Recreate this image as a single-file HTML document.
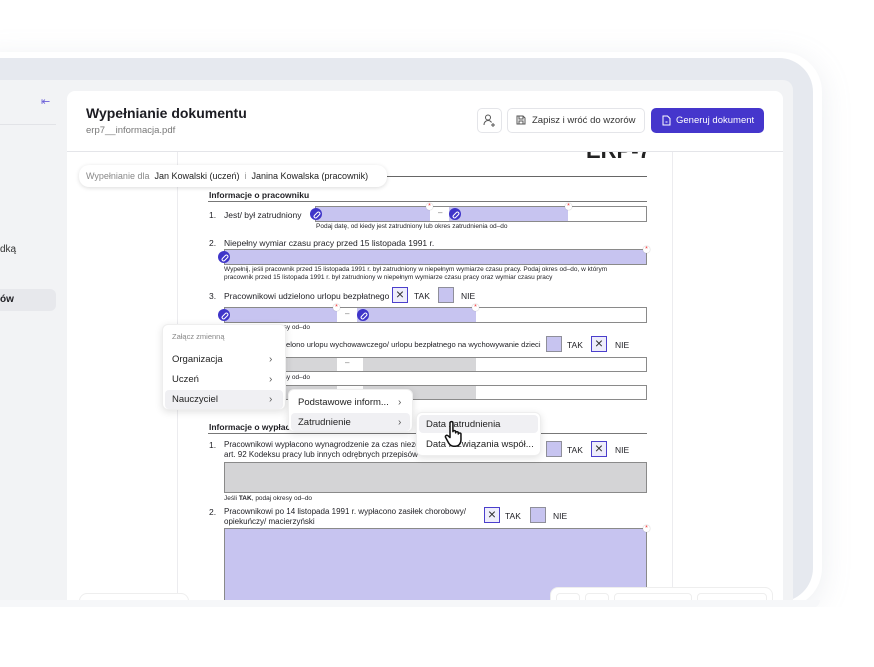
<!DOCTYPE html>
<html><head><meta charset="utf-8"><style>
*{margin:0;padding:0;box-sizing:border-box}
body{width:874px;height:660px;background:#fff;position:relative;overflow:hidden;font-family:"Liberation Sans",sans-serif;color:#1f1f24}
.a{position:absolute}
.t{position:absolute;white-space:nowrap}
.lk{position:absolute;width:12px;height:12px;border-radius:50%;background:#3f35c9}
.lk:after{content:"";position:absolute;left:3px;top:5px;width:6px;height:2px;border:1px solid #fff;border-radius:2px;transform:rotate(-45deg)}
.fld{position:absolute;border:1px solid #8a8a8a;background:#fff}
.fld.pur{background:#c7c4f0}
.pur{background:#c7c4f0}
.st{position:absolute;width:7px;height:7px;border-radius:50%;background:#fff;color:#e33;font-size:7px;line-height:8px;text-align:center;box-shadow:0 0 1px #999}
.cb{position:absolute;width:16px;height:16px;border:1.5px solid #8f8f9a}
.cbp{background:#c7c4f0}
.cbx{border-color:#4b3fcc;background:#eeedfb;font-size:14px;line-height:13px;text-align:center;color:#333}
.s9{font-size:8.5px}
.s7{font-size:6.5px}
.menu{position:absolute;background:#fff;border-radius:6px;box-shadow:0 2px 8px rgba(0,0,0,.12);border:1px solid #eee}
.mi{position:absolute;font-size:9.5px;color:#222;white-space:nowrap}
.hl{position:absolute;background:#f0f0f3;border-radius:4px}
.ch{position:absolute;font-size:10px;color:#555}
</style></head><body>
<div class="a" style="left:-40px;top:52px;width:862px;height:556px;border-radius:40px;background:#fff;box-shadow:0 6px 30px rgba(150,160,180,.18)"></div>
<div class="a" style="left:-40px;top:58px;width:853px;height:544px;border-radius:34px;background:#e6e9ef"></div>
<div class="a" style="left:-40px;top:80px;width:833px;height:520px;border-radius:0 10px 0 0;background:#f2f3f5"></div>
<div class="a" style="left:0;top:124px;width:56px;height:1px;background:#e2e3e7"></div>
<div class="t" style="left:41px;top:95px;color:#6b5fd8;font-size:11px">⇤</div>
<div class="t" style="left:0;top:244px;font-size:10px;color:#333">dką</div>
<div class="a" style="left:0;top:289px;width:56px;height:22px;background:#e7e8ec;border-radius:0 6px 6px 0"></div>
<div class="t" style="left:0;top:294px;font-size:10px;font-weight:bold">ów</div>
<div class="a" style="left:67px;top:91px;width:716px;height:509px;background:#fff;border-radius:8px 8px 0 0"></div>
<div class="t" style="left:86px;top:105px;font-size:14px;font-weight:bold;color:#1c1c22">Wypełnianie dokumentu</div>
<div class="t" style="left:86px;top:125px;font-size:9.5px;color:#777">erp7__informacja.pdf</div>
<div class="a" style="left:67px;top:151px;width:716px;height:1px;background:#e4e5e9"></div>
<div class="a" style="left:477px;top:108px;width:25px;height:25px;border:1px solid #e4e5e9;border-radius:5px"></div>
<svg class="a" style="left:482px;top:113px" width="15" height="15" viewBox="0 0 15 15" fill="none" stroke="#555" stroke-width="1"><circle cx="6" cy="4.5" r="2.5"/><path d="M2 12c0-3 2-4.5 4-4.5s3 1 3.5 2M11 10v4M9 12h4"/></svg>
<div class="a" style="left:507px;top:108px;width:138px;height:25px;border:1px solid #e4e5e9;border-radius:5px"></div>
<svg class="a" style="left:516px;top:115px" width="10" height="10" viewBox="0 0 10 10" fill="none" stroke="#555" stroke-width="1"><path d="M1 1h6l2 2v6H1z M3 1v3h4V1 M3 9V6h4v3"/></svg>
<div class="t" style="left:532px;top:115px;font-size:9.5px;color:#333">Zapisz i wróć do wzorów</div>
<div class="a" style="left:651px;top:108px;width:113px;height:25px;background:#4536cc;border-radius:5px"></div>
<svg class="a" style="left:662px;top:115px" width="9" height="11" viewBox="0 0 9 11" fill="none" stroke="#fff" stroke-width="1"><path d="M1 1h4.5L8 3.5V10H1z M3.5 7h2"/></svg>
<div class="t" style="left:676px;top:115px;font-size:9.5px;color:#fff">Generuj dokument</div>
<div class="a" style="left:177px;top:152px;width:1px;height:448px;background:#ececef"></div>
<div class="a" style="left:672px;top:152px;width:1px;height:448px;background:#ececef"></div>
<div class="a" style="left:580px;top:152px;width:70px;height:9px;overflow:hidden"><div class="t" style="left:6px;top:-14px;font-size:22px;font-weight:bold;color:#222">ERP-7</div></div>
<div class="a" style="left:380px;top:176px;width:267px;height:1px;background:#666"></div>
<div class="a" style="left:79px;top:165px;width:308px;height:22px;background:#fff;border-radius:10px;box-shadow:0 1px 4px rgba(0,0,0,.14)"></div>
<div class="t" style="left:86px;top:171px;font-size:9px;color:#888">Wypełnianie dla <span style="color:#222">&nbsp;Jan Kowalski (uczeń) &nbsp;<span style="color:#999">i</span>&nbsp; Janina Kowalska (pracownik)</span></div>

<div class="t" style="left:209px;top:190px;font-size:8.5px;font-weight:bold">Informacje o pracowniku</div>
<div class="a" style="left:208px;top:201px;width:439px;height:1px;background:#777"></div>
<div class="t s9" style="left:209px;top:210px">1.</div>
<div class="t s9" style="left:224px;top:210px">Jest/ był zatrudniony</div>
<div class="fld" style="left:315px;top:206px;width:332px;height:16px"></div>
<div class="a pur" style="left:316px;top:207px;width:114px;height:14px"></div>
<div class="t" style="left:438px;top:208px;font-size:8px;color:#777">–</div>
<div class="a pur" style="left:449px;top:207px;width:119px;height:14px"></div>
<div class="lk" style="left:310px;top:208px"></div>
<div class="lk" style="left:449px;top:208px"></div>
<div class="st" style="left:426px;top:203px">*</div>
<div class="st" style="left:565px;top:203px">*</div>
<div class="t s7" style="left:316px;top:223px">Podaj datę, od kiedy jest zatrudniony lub okres zatrudnienia od–do</div>
<div class="t s9" style="left:209px;top:238px">2.</div>
<div class="t s9" style="left:224px;top:238px">Niepełny wymiar czasu pracy przed 15 listopada 1991 r.</div>
<div class="fld pur" style="left:224px;top:249px;width:423px;height:16px"></div>
<div class="lk" style="left:218px;top:251px"></div>
<div class="st" style="left:643px;top:246px">*</div>
<div class="t s7" style="left:224px;top:266px;line-height:8px">Wypełnij, jeśli pracownik przed 15 listopada 1991 r. był zatrudniony w niepełnym wymiarze czasu pracy. Podaj okres od–do, w którym<br>pracownik przed 15 listopada 1991 r. był zatrudniony w niepełnym wymiarze czasu pracy oraz wymiar czasu pracy</div>
<div class="t s9" style="left:209px;top:291px">3.</div>
<div class="t s9" style="left:224px;top:291px">Pracownikowi udzielono urlopu bezpłatnego</div>
<div class="cb cbx" style="left:392px;top:287px">×</div>
<div class="t s9" style="left:414px;top:291px">TAK</div>
<div class="cb cbp" style="left:438px;top:287px"></div>
<div class="t s9" style="left:461px;top:291px">NIE</div>
<div class="fld" style="left:224px;top:307px;width:423px;height:16px"></div>
<div class="a pur" style="left:225px;top:308px;width:112px;height:14px"></div>
<div class="t" style="left:345px;top:309px;font-size:8px;color:#777">–</div>
<div class="a pur" style="left:357px;top:308px;width:119px;height:14px"></div>
<div class="lk" style="left:218px;top:309px"></div>
<div class="lk" style="left:357px;top:309px"></div>
<div class="st" style="left:333px;top:304px">*</div>
<div class="st" style="left:472px;top:304px">*</div>
<div class="t s7" style="left:280px;top:324px">esy od–do</div>
<div class="t" style="left:286px;top:340px;font-size:7.6px">elono urlopu wychowawczego/ urlopu bezpłatnego na wychowywanie dzieci</div>
<div class="cb cbp" style="left:546px;top:336px"></div>
<div class="t s9" style="left:567px;top:340px">TAK</div>
<div class="cb cbx" style="left:591px;top:336px">×</div>
<div class="t s9" style="left:615px;top:340px">NIE</div>
<div class="fld" style="left:224px;top:357px;width:423px;height:15px"></div>
<div class="a" style="left:225px;top:358px;width:112px;height:13px;background:#d6d6d8"></div>
<div class="t" style="left:345px;top:358px;font-size:8px;color:#777">–</div>
<div class="a" style="left:363px;top:358px;width:113px;height:13px;background:#d6d6d8"></div>
<div class="t s7" style="left:280px;top:374px">esy od–do</div>
<div class="fld" style="left:224px;top:385px;width:423px;height:15px"></div>
<div class="a" style="left:225px;top:386px;width:112px;height:13px;background:#d6d6d8"></div>
<div class="a" style="left:363px;top:386px;width:113px;height:13px;background:#d6d6d8"></div>
<div class="t" style="left:209px;top:422px;font-size:8.5px;font-weight:bold">Informacje o wypłac</div>
<div class="a" style="left:208px;top:433px;width:439px;height:1px;background:#777"></div>
<div class="t s9" style="left:209px;top:440px">1.</div>
<div class="t" style="left:224px;top:440px;line-height:9.5px;font-size:8px">Pracownikowi wypłacono wynagrodzenie za czas niezdo<br>art. 92 Kodeksu pracy lub innych odrębnych przepisów</div>
<div class="cb cbp" style="left:546px;top:441px"></div>
<div class="t s9" style="left:567px;top:445px">TAK</div>
<div class="cb cbx" style="left:591px;top:441px">×</div>
<div class="t s9" style="left:615px;top:445px">NIE</div>
<div class="fld" style="left:224px;top:462px;width:423px;height:31px;background:#d4d4d6"></div>
<div class="t s7" style="left:224px;top:495px">Jeśli <b>TAK</b>, podaj okresy od–do</div>
<div class="t s9" style="left:209px;top:507px">2.</div>
<div class="t" style="left:224px;top:507px;line-height:9.5px;font-size:8px">Pracownikowi po 14 listopada 1991 r. wypłacono zasiłek chorobowy/<br>opiekuńczy/ macierzyński</div>
<div class="cb cbx" style="left:484px;top:507px">×</div>
<div class="t s9" style="left:505px;top:511px">TAK</div>
<div class="cb cbp" style="left:530px;top:507px"></div>
<div class="t s9" style="left:553px;top:511px">NIE</div>
<div class="fld pur" style="left:224px;top:528px;width:423px;height:80px"></div>
<div class="st" style="left:643px;top:525px">*</div>
<div class="a" style="left:79px;top:593px;width:110px;height:20px;border:1px solid #eee;border-radius:8px;background:#fff"></div>
<div class="a" style="left:550px;top:587px;width:223px;height:30px;border:1px solid #eee;border-radius:8px;background:#fff"></div>
<div class="a" style="left:556px;top:593px;width:24px;height:20px;border:1px solid #eee;border-radius:4px"></div>
<div class="a" style="left:585px;top:593px;width:24px;height:20px;border:1px solid #eee;border-radius:4px"></div>
<div class="a" style="left:614px;top:593px;width:78px;height:20px;border:1px solid #eee;border-radius:4px"></div>
<div class="a" style="left:697px;top:593px;width:70px;height:20px;border:1px solid #eee;border-radius:4px"></div>
<div class="a" style="left:-40px;top:600px;width:860px;height:8px;background:#f6f7f9;border-radius:0 0 30px 0"></div>
<div class="a" style="left:-40px;top:607px;width:900px;height:60px;background:#fff"></div>
<div class="menu" style="left:162px;top:324px;width:124px;height:86px">
<div class="t" style="left:9px;top:7px;font-size:7.5px;color:#888">Załącz zmienną</div>
<div class="mi" style="left:9px;top:29px">Organizacja</div><div class="ch" style="left:106px;top:29px">›</div>
<div class="mi" style="left:9px;top:49px">Uczeń</div><div class="ch" style="left:106px;top:49px">›</div>
<div class="hl" style="left:2px;top:65px;width:118px;height:19px"></div>
<div class="mi" style="left:9px;top:69px">Nauczyciel</div><div class="ch" style="left:106px;top:69px">›</div>
</div>
<div class="menu" style="left:288px;top:389px;width:125px;height:43px">
<div class="mi" style="left:9px;top:7px">Podstawowe inform...</div><div class="ch" style="left:109px;top:7px">›</div>
<div class="hl" style="left:2px;top:23px;width:119px;height:18px"></div>
<div class="mi" style="left:9px;top:27px">Zatrudnienie</div><div class="ch" style="left:109px;top:27px">›</div>
</div>
<div class="menu" style="left:416px;top:412px;width:125px;height:44px">
<div class="hl" style="left:2px;top:2px;width:119px;height:18px"></div>
<div class="mi" style="left:9px;top:6px">Data zatrudnienia</div>
<div class="mi" style="left:9px;top:26px">Data rozwiązania współ...</div>
</div>
<svg class="a" style="left:444px;top:420px" width="26" height="28" viewBox="0 0 22 24"><path d="M5 2.5c0-1.5 2.5-1.5 2.5 0V10c0-1.2 2.3-1.2 2.3 0v1c0-1.2 2.3-1.2 2.3 0v1c0-1.2 2.3-1.2 2.3 0v5c0 3-2 5.5-5 5.5H8c-2 0-3-1-4-2.5L1.3 15c-.8-1.3.8-2.6 2-1.5L5 15z" fill="#fff" stroke="#111" stroke-width="1.3" stroke-linejoin="round"/></svg>
</body></html>
